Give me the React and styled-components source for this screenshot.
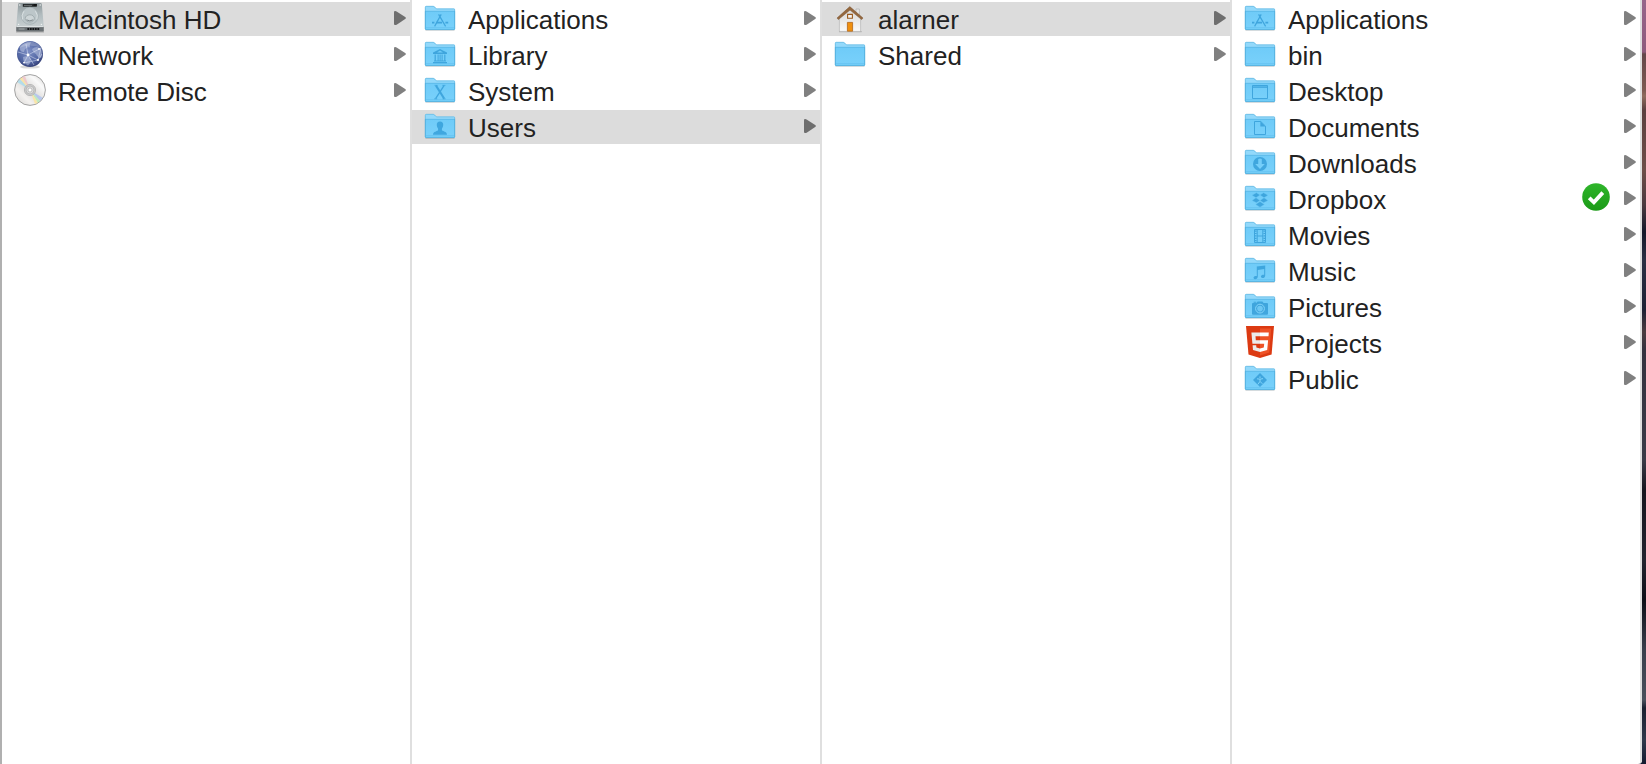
import React, { useState } from "react";
import styled, { createGlobalStyle } from "styled-components";

const GlobalStyle = createGlobalStyle`
  * { box-sizing: border-box; }
  body {
    margin: 0;
    background: #fff;
    font-family: "Liberation Sans", Arial, sans-serif;
  }
`;

const Desktop = styled.div`
  display: flex;
  min-height: 100vh;
  padding-right: 4px;
  background: linear-gradient(
    to bottom,
    #97658a 0,
    #8d5a7c 52px,
    #64474a 54px,
    #7d5a52 90px,
    #8f6c5e 96px,
    #5c4040 110px,
    #6e4e48 170px,
    #4a3a40 205px,
    #15182a 232px,
    #2b3044 260px,
    #1e2134 310px,
    #4b3c40 332px,
    #34323f 350px,
    #3a3b47 460px,
    #16161f 490px,
    #23242f 560px,
    #0e0f18 600px,
    #3a3f4c 650px,
    #4a505c 700px,
    #1b2030 708px,
    #30384a 740px,
    #141a30 764px
  );
`;

const Browser = styled.main`
  flex: 1;
  display: grid;
  grid-template-columns: repeat(4, minmax(0, 1fr));
  border-left: 2px solid #b0b0b0;
  border-bottom-right-radius: 4px;
  overflow: hidden;
  background: #fff;
`;

const Column = styled.ul`
  display: flex;
  flex-direction: column;
  gap: 2px;
  margin: 0;
  padding: 2px 0;
  border-right: 2px solid #dfdfdf;
  list-style: none;
`;

const Row = styled.button`
  display: flex;
  align-items: flex-start;
  gap: 12px;
  width: 100%;
  height: 34px;
  padding: 0 4px 0 12px;
  border: 0;
  background: ${(p) => (p.$selected ? "#dcdcdc" : "transparent")};
  color: #222;
  font-family: inherit;
  font-size: 26px;
  line-height: 32px;
  text-align: left;
`;

const Name = styled.span`
  flex: 1;
  min-width: 0;
  padding-top: 2px;
  overflow: hidden;
  white-space: nowrap;
  text-overflow: ellipsis;
`;

const Icon = styled.svg`
  flex: none;
  display: block;
  width: 32px;
  height: 32px;
`;

const ArrowIcon = styled.svg`
  flex: none;
  display: block;
  width: 12px;
  height: 32px;
`;

const Arrow = ({ selected }) => (
  <ArrowIcon viewBox="0 0 12 32" aria-hidden="true">
    <path
      d="M0 10.2Q0 9 1.2 9.1Q2 9.2 3 9.8L11.2 14.9Q12.6 16 11.2 17.1L3 22.4Q2 23 1.2 23.1Q0 23.2 0 22Z"
      fill={selected ? "#6e6e6e" : "#808080"}
    />
  </ArrowIcon>
);

const INK = "#2793d1";

const glyphs = {
  apps: (
    <g fill="none" stroke={INK} strokeWidth="1.2">
      <path d="M17.2 12.4L10.6 24.4M14.6 12.4L21.6 24.4" />
      <path d="M8 20.6h2.4M12 20.6h6M21.4 20.6h2.8" strokeWidth="1.6" />
    </g>
  ),
  library: (
    <g fill={INK}>
      <path d="M16 11L23 14.4V16H9V14.4ZM16 12.6L13 14.4H19Z" fillRule="evenodd" />
      <path d="M10.6 16.4h1.2v6.2h-1.2zM13.6 16.4h1v6.2h-1zM15.6 16.4h1v6.2h-1zM17.6 16.4h1v6.2h-1zM20.2 16.4h1.2v6.2h-1.2zM10 22.6h12v1h-12zM9 24h14v1.2H9z" />
    </g>
  ),
  system: (
    <g stroke={INK} fill="none">
      <path d="M12 11.6L20.2 24.6" strokeWidth="2" />
      <path d="M20 11.6L11.6 24.6" strokeWidth="1.3" />
      <path d="M10.6 11.4h3M18.4 11.4h3M10.2 24.8h3M18.6 24.8h3" strokeWidth=".8" />
    </g>
  ),
  users: (
    <path
      fill={INK}
      d="M16 11.4C18.2 11.4 19.3 12.8 19.2 14.8C19.2 16.6 18.5 17.6 18 18.4C17.8 19.4 17.8 20.2 18.6 20.8C20.6 21.8 22.8 22 23 24.8H9C9.2 22 11.4 21.8 13.4 20.8C14.2 20.2 14.2 19.4 14 18.4C13.5 17.6 12.8 16.6 12.8 14.8C12.7 12.8 13.8 11.4 16 11.4Z"
    />
  ),
  desktop: (
    <g>
      <path d="M8.5 11.5h15v13h-15z" fill="none" stroke={INK} />
      <path d="M9 12.4h14v1.4H9z" fill={INK} />
    </g>
  ),
  documents: (
    <g>
      <path d="M10.5 11.5h6.3L21.5 16.2V24.5H10.5Z" fill="none" stroke={INK} />
      <path d="M16.4 11.5L21.5 16.6H16.4Z" fill={INK} />
    </g>
  ),
  downloads: (
    <path
      fill={INK}
      fillRule="evenodd"
      d="M16 11A7 7 0 1 1 16 25A7 7 0 1 1 16 11ZM14.2 13V18H11.2L16 23L20.8 18H17.8V13Q16 12.2 14.2 13Z"
    />
  ),
  dropbox: (
    <path
      fill={INK}
      d="M12.4 10.8L16 13L12 15.8L8 13.2ZM19.6 10.8L24 13.2L20 15.8L16 13ZM12 15.8L16 18.6L12.4 20.8L8 18.4ZM20 15.8L24 18.4L19.6 20.8L16 18.6ZM16 19.6L20.4 22.4L16 25.2L11.6 22.4Z"
      stroke="#6ccbf8"
      strokeWidth=".4"
    />
  ),
  movies: (
    <g>
      <path d="M10.5 11.5h11v13h-11z" fill="none" stroke={INK} />
      <path d="M13.2 11v14M18.8 11v14M13 18h6" stroke={INK} />
      <path d="M11.8 12.5v11.5M20.2 12.5v11.5" stroke={INK} strokeWidth="1.6" strokeDasharray="1.2 1.2" />
    </g>
  ),
  music: (
    <path
      fill={INK}
      d="M12.8 12.6L21.2 11.4V21.4C21.2 23 20 24 18.6 24C17 24 16.4 22.6 17.4 21.6C18.2 20.8 19.2 20.8 20.2 20.8V15L13.8 16V22.6C13.8 24.2 12.6 25.2 11.2 25.2C9.6 25.2 9 23.8 10 22.8C10.8 22 11.8 22 12.8 22Z"
    />
  ),
  pictures: (
    <g>
      <path fill={INK} d="M9.6 11.8h2.6v1H9.6zM9 13H12.4L13.6 11.4H18.4L19.6 13H23Q24 13 24 14V23.8Q24 24.8 23 24.8H9Q8 24.8 8 23.8V14Q8 13 9 13Z" />
      <circle cx="16" cy="18.6" r="4.4" fill="none" stroke="#8ad8fb" />
      <circle cx="16" cy="18.6" r="2.8" fill="#6cc6f2" />
    </g>
  ),
  public: (
    <g>
      <path fill={INK} d="M16 11L23 18L16 25L9 18Z" />
      <path d="M16 14.4v1.6M13 16.8l3 .4l3-.6M16 17v2.4l-2.2 3M16 19.4l2.4 2.4" stroke="#8ad8fb" strokeWidth="1" fill="none" />
    </g>
  ),
};

const Folder = ({ glyph }) => (
  <Icon viewBox="0 0 32 32" aria-hidden="true">
    <path d="M1.4 27.6h29.2v1.2H1.4z" fill="#000" opacity=".16" />
    <path d="M1 5.2Q1 4 2.2 4H9Q10.2 4 10.8 4.8L12 6.2Q12.4 6.6 13.2 6.6H29.8Q31 6.6 31 7.8V11H1Z" fill="#93d9fb" />
    <path d="M1.3 27V5.4Q1.3 4.3 2.3 4.3H9Q10 4.3 10.6 5L11.8 6.4Q12.4 6.9 13.2 6.9H29.7Q30.7 6.9 30.7 7.9V27" fill="none" stroke="#61b6e0" strokeWidth=".7" />
    <path d="M1 9H31V27Q31 28 30 28H2Q1 28 1 27Z" fill="url(#folderFront)" />
    <path d="M1 9.3H31" stroke="#58b4e2" strokeWidth=".7" />
    <path d="M1.4 9.2V27Q1.4 27.6 2 27.6H30Q30.6 27.6 30.6 27V9.2" fill="none" stroke="#4fabd9" strokeWidth=".8" />
    <path d="M2 25.8H30" stroke="#58b9ea" strokeWidth=".6" />
    <g opacity=".68">{glyphs[glyph]}</g>
  </Icon>
);

const HardDrive = () => (
  <Icon viewBox="0 0 32 32" aria-hidden="true">
    <path d="M2 28.8h28v1.8h-28z" fill="#000" opacity=".2" />
    <path d="M5.4 1H26.6Q27.6 1 27.8 2L29.8 24.8H2.2L4.2 2Q4.4 1 5.4 1Z" fill="url(#driveTop)" />
    <path d="M2.2 24.6H29.8V28.2Q29.8 29.4 28.6 29.4H3.4Q2.2 29.4 2.2 28.2Z" fill="#6a7073" />
    <path d="M2.4 24.6H29.6" stroke="#e4e9ea" strokeWidth="1" />
    <path d="M8.8 2h14v2.8H8.8z" fill="#24282a" />
    <path d="M10 3.4h8" stroke="#8a8f91" strokeWidth=".7" />
    <path d="M19.6 2h3.2v1.8h-3.2z" fill="#101213" />
    <circle cx="15.8" cy="13.8" r="8.6" fill="#bcc6c9" stroke="#9ea9ad" strokeWidth=".6" />
    <path d="M8.6 17.4Q7 13 10 9.2M22.8 17.4Q24.4 13 21.4 9.2" fill="none" stroke="#dfe6e7" strokeWidth=".8" />
    <ellipse cx="15.8" cy="16.4" rx="4.6" ry="3.6" fill="#cdd5d7" stroke="#929da1" strokeWidth=".7" />
    <path d="M12.4 17.8Q15.8 20 19.2 17.8" fill="none" stroke="#7f8a8e" strokeWidth="1" />
    <g fill="#f0f2f2">
      <circle cx="5.8" cy="3" r=".7" /><circle cx="26.2" cy="3" r=".7" />
      <circle cx="4.6" cy="22.4" r=".7" /><circle cx="27.4" cy="22.4" r=".7" />
    </g>
    <path d="M4.6 27h6" stroke="#a6acae" strokeWidth="1" />
    <path d="M13.4 27h12" stroke="#151719" strokeWidth="2.2" strokeDasharray="1.8 .7" />
  </Icon>
);

const Globe = () => (
  <Icon viewBox="0 0 32 32" aria-hidden="true">
    <ellipse cx="16" cy="29" rx="10" ry="1.6" fill="#000" opacity=".15" />
    <circle cx="16" cy="16" r="13" fill="url(#globeFill)" />
    <path d="M6 9Q10 4 17 4.2Q15 7 16 9.4Q11 9 10 14Q5 14 6 9ZM18 11Q23 7 27 11Q29 16 27 20Q23 19 22 16Q19 15 18 11ZM9 19Q14 17 17 21Q17 25 14 27.6Q9 25 9 19Z" fill="#c4cde8" opacity=".5" />
    <g fill="none" stroke="#eef2ff" strokeWidth=".6" opacity=".75">
      <path d="M4 14L14 17L27 10M14 17L10 25M14 17L24 22L28 16M14 17L12 6M14 17L20 27M10 25L24 22M27 10L24 22" />
    </g>
    <g fill="#fff">
      <circle cx="14" cy="17" r="1.4" /><circle cx="24" cy="22" r="1" />
      <circle cx="10" cy="24.6" r=".9" /><circle cx="25" cy="11" r=".9" />
    </g>
    <path d="M5 10Q8 4 16 3.4Q24 4 27 10Q16 5 5 10Z" fill="#fff" opacity=".2" />
  </Icon>
);

const Disc = () => (
  <Icon viewBox="0 0 32 32" aria-hidden="true">
    <circle cx="16" cy="16" r="15.4" fill="url(#discFill)" stroke="#9a9a9a" strokeWidth=".9" />
    <g opacity=".75">
      <path d="M16 16L3.4 8.2A15 15 0 0 1 6 5Z" fill="#a6dcee" />
      <path d="M16 16L6 5A15 15 0 0 1 8.2 3.3Z" fill="#ffe596" />
      <path d="M16 16L8.2 3.3A15 15 0 0 1 11 2Z" fill="#f2bfc4" />
      <path d="M16 16L28.6 23.8A15 15 0 0 1 26 27Z" fill="#a9c0f2" />
      <path d="M16 16L26 27A15 15 0 0 1 23.8 28.7Z" fill="#b0eeb6" />
      <path d="M16 16L23.8 28.7A15 15 0 0 1 21 30Z" fill="#ffe596" />
    </g>
    <circle cx="16" cy="16" r="5.6" fill="#cdcdcd" stroke="#b0b0b0" strokeWidth=".8" />
    <circle cx="16" cy="16" r="4" fill="#dcdcdc" stroke="#a8a8a8" strokeWidth=".6" />
    <circle cx="16" cy="16" r="2" fill="#fff" stroke="#a0a0a0" strokeWidth=".6" />
  </Icon>
);

const Home = () => (
  <Icon viewBox="0 0 32 32" aria-hidden="true">
    <path d="M5 29h22.6v1.2H5z" fill="#000" opacity=".22" />
    <path d="M22 7h3.4v6H22z" fill="#e6e6e6" stroke="#aaa" strokeWidth=".6" />
    <path d="M5.4 16L16 6.6L26.6 16V29.4H5.4Z" fill="url(#wall)" stroke="#adadad" strokeWidth=".6" />
    <path d="M15.8 4.6L29 16L27.6 17.6L16 8L4.4 17.6L3 16Z" fill="#94683f" stroke="#7a532f" strokeWidth=".5" />
    <path d="M13.6 12.4h4.8v3.8h-4.8z" fill="#f3f3f3" stroke="#9a5a1c" strokeWidth="1.1" />
    <path d="M13.4 20.4h5.2v8.8h-5.2z" fill="#f0900f" stroke="#b0651a" strokeWidth=".8" />
  </Icon>
);

const Html5 = () => (
  <Icon viewBox="0 0 32 32" aria-hidden="true">
    <path d="M2 0H30L27.6 28.4L16 32L4.5 28.4Z" fill="#dc3a12" />
    <path d="M16 2.6H27.2L25.2 26.4L16 29.4Z" fill="#ee5226" />
    <path d="M16 6.6H7.4L8.4 17.8H16V14.2H11.8L11.5 10.2H16ZM16 22.4L12.4 21.4L12.2 19.2H8.6L9 24L16 26Z" fill="#ebebeb" />
    <path d="M16 6.6H24.8L24.5 10.2H16ZM16 14.2H24.1L23.2 24L16 26V22.4L19.8 21.4L20.2 17.8H16Z" fill="#fff" />
  </Icon>
);

const Synced = () => (
  <Icon viewBox="0 0 32 32" role="img" aria-label="Synced">
    <circle cx="16" cy="15" r="13.8" fill="url(#syncFill)" />
    <path d="M9.2 15.8L13.9 20.3L22.8 10.6" fill="none" stroke="#fff" strokeWidth="3.8" />
  </Icon>
);

const SharedPaints = styled.svg`
  position: absolute;
  width: 0;
  height: 0;
`;

const Paints = () => (
  <SharedPaints aria-hidden="true">
    <defs>
      <linearGradient id="folderFront" x1="0" y1="0" x2="0" y2="1">
        <stop offset="0" stopColor="#6fcbf8" />
        <stop offset="1" stopColor="#79d1fb" />
      </linearGradient>
      <linearGradient id="driveTop" x1="0" y1="0" x2="0" y2="1">
        <stop offset="0" stopColor="#8f999c" />
        <stop offset=".5" stopColor="#b2bcbf" />
        <stop offset="1" stopColor="#c6ced0" />
      </linearGradient>
      <radialGradient id="globeFill" cx=".45" cy=".4" r=".6">
        <stop offset="0" stopColor="#7d8fc4" />
        <stop offset=".7" stopColor="#5367a4" />
        <stop offset="1" stopColor="#36427a" />
      </radialGradient>
      <linearGradient id="discFill" x1="0" y1="1" x2="1" y2="0">
        <stop offset="0" stopColor="#d2d0ce" />
        <stop offset=".3" stopColor="#f4f2f0" />
        <stop offset=".5" stopColor="#dedcda" />
        <stop offset=".75" stopColor="#fafafa" />
        <stop offset="1" stopColor="#cdcbc9" />
      </linearGradient>
      <linearGradient id="wall" x1="0" y1="0" x2="0" y2="1">
        <stop offset="0" stopColor="#d8d8d8" />
        <stop offset="1" stopColor="#fafafa" />
      </linearGradient>
      <linearGradient id="syncFill" x1="0" y1="0" x2="0" y2="1">
        <stop offset="0" stopColor="#2fb52b" />
        <stop offset="1" stopColor="#1b9a17" />
      </linearGradient>
    </defs>
  </SharedPaints>
);

const columns = [
  {
    label: "Volumes",
    selected: "Macintosh HD",
    items: [
      { name: "Macintosh HD", icon: <HardDrive /> },
      { name: "Network", icon: <Globe /> },
      { name: "Remote Disc", icon: <Disc /> },
    ],
  },
  {
    label: "Macintosh HD",
    selected: "Users",
    items: [
      { name: "Applications", glyph: "apps" },
      { name: "Library", glyph: "library" },
      { name: "System", glyph: "system" },
      { name: "Users", glyph: "users" },
    ],
  },
  {
    label: "Users",
    selected: "alarner",
    items: [{ name: "alarner", icon: <Home /> }, { name: "Shared" }],
  },
  {
    label: "alarner",
    items: [
      { name: "Applications", glyph: "apps" },
      { name: "bin" },
      { name: "Desktop", glyph: "desktop" },
      { name: "Documents", glyph: "documents" },
      { name: "Downloads", glyph: "downloads" },
      { name: "Dropbox", glyph: "dropbox", synced: true },
      { name: "Movies", glyph: "movies" },
      { name: "Music", glyph: "music" },
      { name: "Pictures", glyph: "pictures" },
      { name: "Projects", icon: <Html5 /> },
      { name: "Public", glyph: "public" },
    ],
  },
];

function BrowserColumn({ column }) {
  const [selected, setSelected] = useState(column.selected);
  return (
    <Column aria-label={column.label}>
      {column.items.map(({ name, icon, glyph, synced }) => (
        <li key={name}>
          <Row
            type="button"
            $selected={selected === name}
            aria-current={selected === name ? "true" : undefined}
            onClick={() => setSelected(name)}
          >
            {icon || <Folder glyph={glyph} />}
            <Name>{name}</Name>
            {synced && <Synced />}
            <Arrow selected={selected === name} />
          </Row>
        </li>
      ))}
    </Column>
  );
}

export default function App() {
  return (
    <Desktop>
      <GlobalStyle />
      <Paints />
      <Browser>
        {columns.map((column) => (
          <BrowserColumn key={column.label} column={column} />
        ))}
      </Browser>
    </Desktop>
  );
}
